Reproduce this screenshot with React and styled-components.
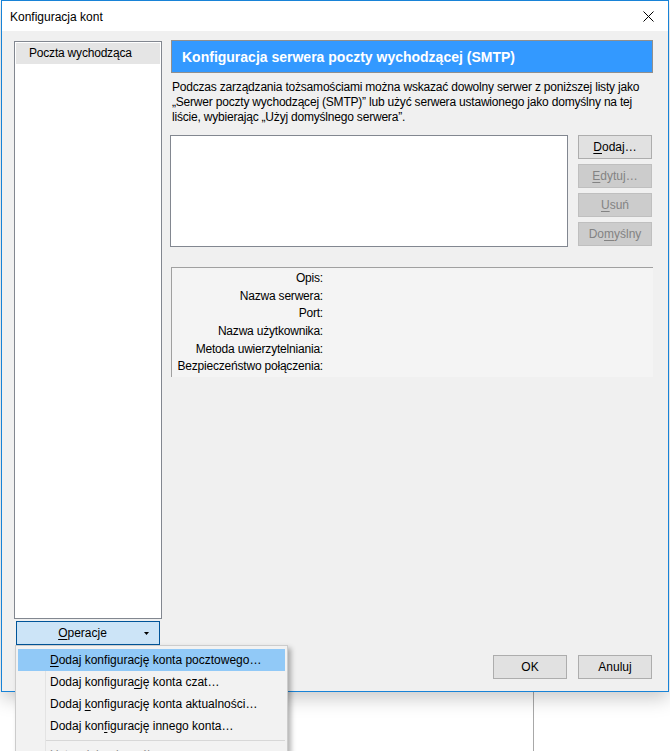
import React from 'react';
import styled, { createGlobalStyle } from 'styled-components';

const Global = createGlobalStyle`
  html, body { margin: 0; padding: 0; background: #ffffff; }
  body {
    font-family: "Liberation Sans", Arial, sans-serif;
    font-size: 12px;
    color: #000;
  }
`;

const Page = styled.div`
  position: relative;
  width: 670px;
  height: 751px;
  overflow: hidden;
  background: #ffffff;
`;

const Window = styled.div`
  position: relative;
  z-index: 1;
  margin-left: 1px;
  width: 668px;
  height: 692px;
  box-sizing: border-box;
  border: 1px solid #1883d7;
  background: #f0f0f0;
  display: flex;
  flex-direction: column;
  box-shadow: 0 6px 18px rgba(0, 0, 0, 0.22);
`;

const TitleBar = styled.div`
  height: 30px;
  flex: none;
  background: #ffffff;
  display: flex;
  align-items: center;
  justify-content: space-between;
  padding: 0 14px 0 8px;
`;

const Title = styled.span`
  font-size: 12px;
  padding-top: 1px;
`;

const CloseIcon = styled.svg`
  width: 11px;
  height: 11px;
  display: block;
`;

const Body = styled.div`
  flex: 1;
  display: flex;
  padding: 9px 15px 12px 12px;
  min-height: 0;
`;

const Sidebar = styled.div`
  width: 148px;
  flex: none;
  margin-right: 9px;
  padding-top: 1px;
  margin-bottom: 34px;
  display: flex;
  flex-direction: column;
`;

const NavList = styled.div`
  flex: 1;
  background: #ffffff;
  border: 1px solid #828790;
  padding: 1px;
`;

const NavItem = styled.div`
  height: 21px;
  line-height: 20px;
  padding-left: 13px;
  letter-spacing: -0.2px;
  background: ${p => (p.$selected ? '#e5e5e5' : 'transparent')};
`;

const MenuButton = styled.div`
  margin: 2px 2px 0;
  height: 24px;
  box-sizing: border-box;
  border: 1px solid #005499;
  background: #cce4f7;
  display: flex;
  align-items: center;
  justify-content: center;
  position: relative;
  padding-right: 11px;
`;

const Arrow = styled.svg`
  position: absolute;
  right: 10px;
  top: 10px;
  width: 5px;
  height: 3px;
`;

const Mn = styled.span`
  text-decoration: underline;
  text-underline-offset: 2px;
`;

const Main = styled.div`
  flex: 1;
  display: flex;
  flex-direction: column;
  min-width: 0;
`;

const Header = styled.div`
  height: 33px;
  box-sizing: border-box;
  border: 1px solid #8f8f8f;
  background: #3399ff;
  color: #ffffff;
  font-weight: bold;
  font-size: 14px;
  display: flex;
  align-items: center;
  padding-left: 10px;
  padding-top: 1px;
`;

const Description = styled.p`
  margin: 7px 0 0 1px;
  line-height: 15px;
  white-space: nowrap;
  letter-spacing: -0.2px;
`;

const ServerRow = styled.div`
  margin-top: 10px;
  display: flex;
  gap: 10px;
  margin-right: 1px;
`;

const ServerList = styled.div`
  flex: 1;
  margin-left: -1px;
  height: 112px;
  box-sizing: border-box;
  background: #ffffff;
  border: 1px solid #828790;
`;

const ButtonColumn = styled.div`
  width: 74px;
  display: flex;
  flex-direction: column;
  gap: 5px;
`;

const Button = styled.div`
  width: ${p => p.$width || 74}px;
  height: 24px;
  box-sizing: border-box;
  border: 1px solid ${p => (p.$disabled ? '#bfbfbf' : '#adadad')};
  background: ${p => (p.$disabled ? '#cccccc' : '#e1e1e1')};
  color: ${p => (p.$disabled ? '#838383' : '#000000')};
  display: flex;
  align-items: center;
  justify-content: center;
`;

const Details = styled.div`
  margin-top: 20px;
  height: 110px;
  box-sizing: border-box;
  border-top: 1px solid #a0a0a0;
  border-left: 1px solid #a0a0a0;
  background: #f4f4f4;
  padding-top: 2px;
  display: grid;
  grid-template-columns: 151px 1fr;
  grid-auto-rows: 17.7px;
  align-content: start;
`;

const Label = styled.div`
  text-align: right;
  line-height: 17.7px;
  letter-spacing: -0.2px;
  white-space: nowrap;
`;

const Value = styled.div`
  line-height: 17.7px;
`;

const Footer = styled.div`
  margin-top: auto;
  display: flex;
  justify-content: flex-end;
  gap: 11px;
  margin-right: 1px;
`;

const Desktop = styled.div`
  height: 59px;
  display: flex;
`;

const DesktopLine = styled.div`
  margin-left: 533px;
  width: 1px;
  background: #a8a8a8;
`;

const Popup = styled.div`
  position: absolute;
  z-index: 2;
  left: 15px;
  top: 645px;
  width: 273px;
  box-sizing: border-box;
  border: 1px solid #cccccc;
  background: #f2f2f2;
  padding: 3px 2px;
  box-shadow: 3px 3px 5px rgba(0, 0, 0, 0.3);
  &::before {
    content: '';
    position: absolute;
    left: 29px;
    top: 3px;
    bottom: 0;
    width: 1px;
    background: #e3e3e3;
  }
`;

const PopupItem = styled.div`
  position: relative;
  height: 22px;
  line-height: 22px;
  padding-left: 32px;
  white-space: nowrap;
  background: ${p => (p.$active ? '#91c9f7' : 'transparent')};
  color: ${p => (p.$disabled ? '#8c8c8c' : '#000')};
`;

const Separator = styled.div`
  position: relative;
  height: 7px;
  display: flex;
  align-items: center;
  padding-left: 28px;
  &::after {
    content: '';
    flex: 1;
    height: 1px;
    background: #d7d7d7;
  }
`;

const labels = [
  'Opis:',
  'Nazwa serwera:',
  'Port:',
  'Nazwa użytkownika:',
  'Metoda uwierzytelniania:',
  'Bezpieczeństwo połączenia:',
];

export default function App() {
  return (
    <Page>
      <Global />
      <Window>
        <TitleBar>
          <Title>Konfiguracja kont</Title>
          <CloseIcon viewBox="0 0 11 11">
            <path d="M0.5 0.5 L10.5 10.5 M10.5 0.5 L0.5 10.5" stroke="#000" strokeWidth="1" fill="none" />
          </CloseIcon>
        </TitleBar>
        <Body>
          <Sidebar>
            <NavList>
              <NavItem $selected>Poczta wychodząca</NavItem>
            </NavList>
            <MenuButton>
              <span><Mn>O</Mn>peracje</span>
              <Arrow viewBox="0 0 5 3">
                <path d="M0 0 H5 L2.5 3 Z" fill="#000" />
              </Arrow>
            </MenuButton>
          </Sidebar>
          <Main>
            <Header>Konfiguracja serwera poczty wychodzącej (SMTP)</Header>
            <Description>
              Podczas zarządzania tożsamościami można wskazać dowolny serwer z poniższej listy jako
              <br />
              „Serwer poczty wychodzącej (SMTP)” lub użyć serwera ustawionego jako domyślny na tej
              <br />
              liście, wybierając „Użyj domyślnego serwera”.
            </Description>
            <ServerRow>
              <ServerList />
              <ButtonColumn>
                <Button><span><Mn>D</Mn>odaj…</span></Button>
                <Button $disabled><span><Mn>E</Mn>dytuj…</span></Button>
                <Button $disabled><span><Mn>U</Mn>suń</span></Button>
                <Button $disabled><span>Do<Mn>m</Mn>yślny</span></Button>
              </ButtonColumn>
            </ServerRow>
            <Details>
              {labels.map(l => (
                <React.Fragment key={l}>
                  <Label>{l}</Label>
                  <Value />
                </React.Fragment>
              ))}
            </Details>
            <Footer>
              <Button>OK</Button>
              <Button>Anuluj</Button>
            </Footer>
          </Main>
        </Body>
      </Window>
      <Desktop>
        <DesktopLine />
      </Desktop>
      <Popup>
        <PopupItem $active><Mn>D</Mn>odaj konfigurację konta pocztowego…</PopupItem>
        <PopupItem>Dodaj konfigura<Mn>c</Mn>ję konta czat…</PopupItem>
        <PopupItem>Dodaj <Mn>k</Mn>onfigurację konta aktualności…</PopupItem>
        <PopupItem>Dodaj kon<Mn>f</Mn>igurację innego konta…</PopupItem>
        <Separator />
        <PopupItem $disabled>Ustaw jako domyślne</PopupItem>
      </Popup>
    </Page>
  );
}
